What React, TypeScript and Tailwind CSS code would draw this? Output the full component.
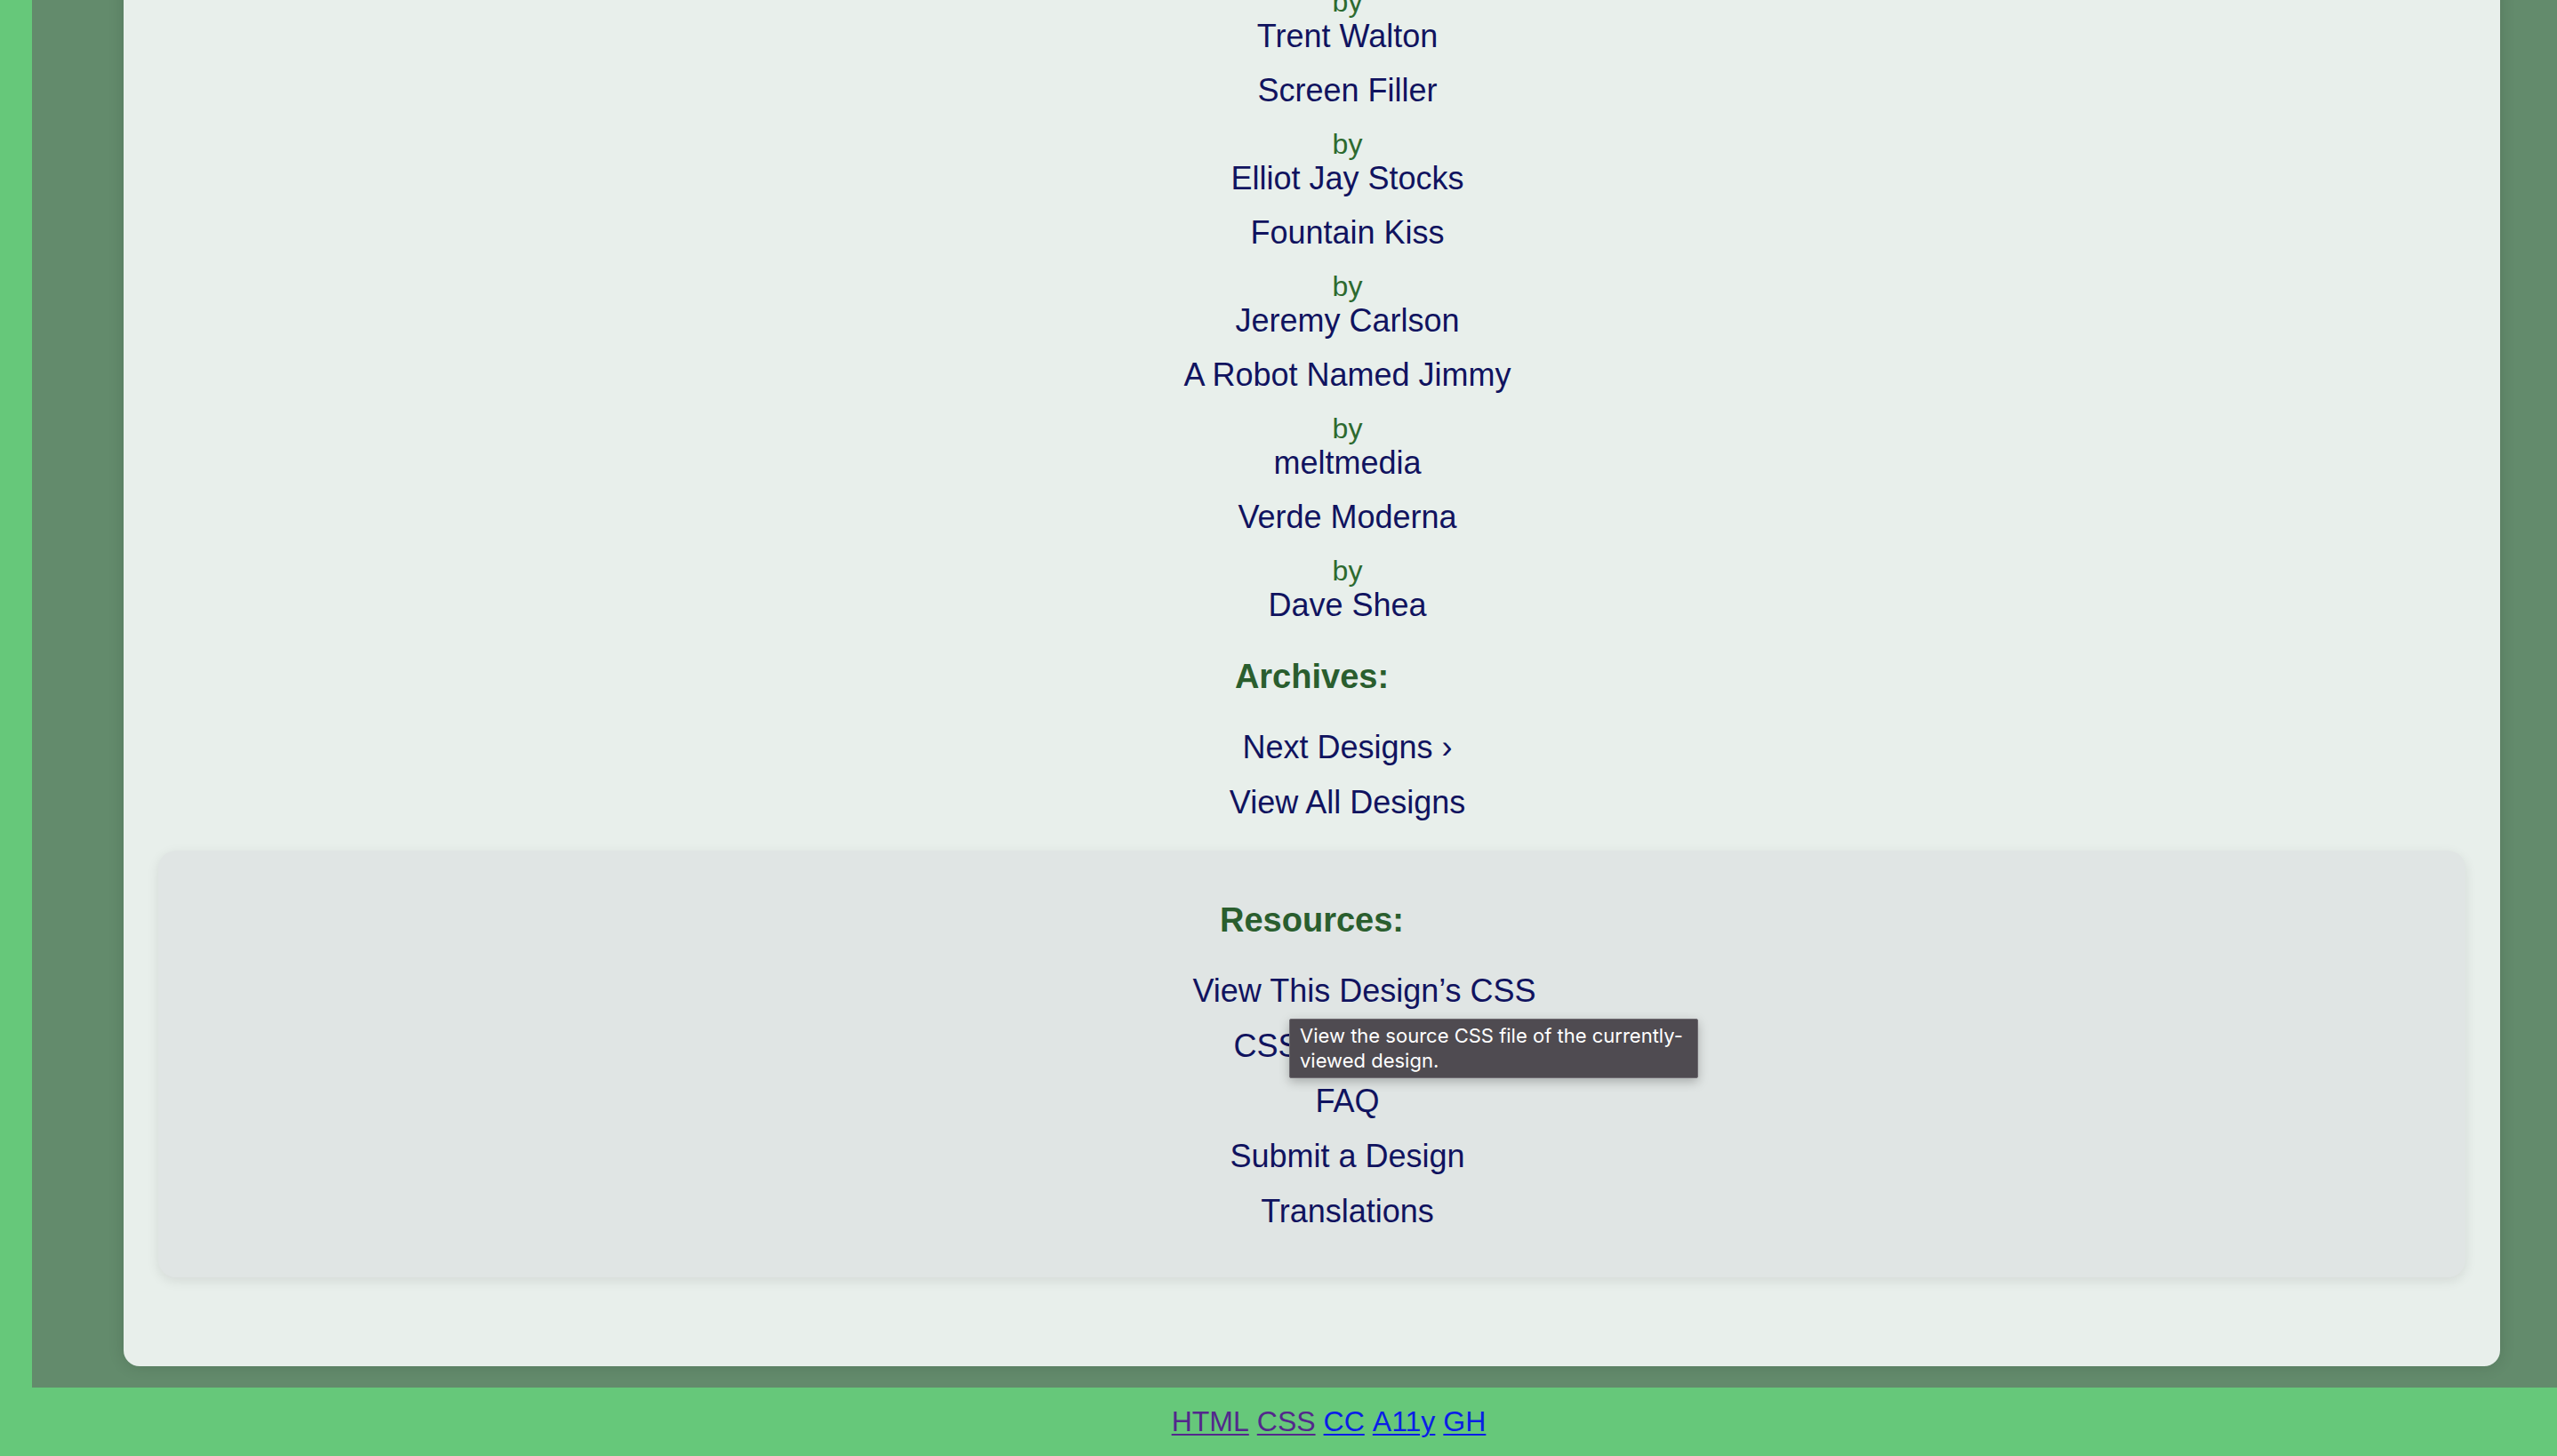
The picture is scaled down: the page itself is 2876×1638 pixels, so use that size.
const designs = [
  { title: 'Screen Filler', author: 'Elliot Jay Stocks' },
  { title: 'Fountain Kiss', author: 'Jeremy Carlson' },
  { title: 'A Robot Named Jimmy', author: 'meltmedia' },
  { title: 'Verde Moderna', author: 'Dave Shea' },
]

const resources = [
  'View This Design’s CSS',
  'CSS Resources',
  'FAQ',
  'Submit a Design',
  'Translations',
]

function By() {
  return <div className="text-[32px] leading-[38px] text-[#2d6a2f]">by</div>
}

function Name({ children }: { children: React.ReactNode }) {
  return <a className="block text-[36px] leading-[40px] text-[#10135f]">{children}</a>
}

export default function App() {
  return (
    <div
      className="relative w-[2876px] h-[1638px] overflow-hidden bg-[#66c87a]"
      style={{ fontFamily: '"Liberation Sans", Arial, sans-serif' }}
    >
      <div className="pl-[36px]">
        <div className="bg-[#638b6c] pl-[103px] pr-[64px] pb-[24px]">
          <div className="-mt-[40px] rounded-[18px] bg-[#e8efeb] px-[39px] pt-[23px] pb-[100px] shadow-[0_0_18px_rgba(0,0,0,0.14)]">
            <ul className="flex flex-col pl-[80px] text-center">
              <li className="mb-[21px]">
                <By />
                <Name>Trent Walton</Name>
              </li>
              {designs.map((d) => (
                <li key={d.title} className="mb-[21px]">
                  <Name>{d.title}</Name>
                  <div className="mt-[21px]">
                    <By />
                    <Name>{d.author}</Name>
                  </div>
                </li>
              ))}
            </ul>

            <h3 className="mt-[17px] text-center text-[38px] leading-[44px] font-bold text-[#2a5e2e]">Archives:</h3>
            <ul className="mt-[38px] pl-[80px] text-center flex flex-col gap-[22px]">
              <li><Name>Next Designs ›</Name></li>
              <li><Name>View All Designs</Name></li>
            </ul>

            <div className="mt-[34px] rounded-[20px] bg-[#e0e5e4] pt-[56px] pb-[54px] shadow-[0_4px_14px_rgba(0,0,0,0.09)]">
              <h3 className="text-center text-[38px] leading-[44px] font-bold text-[#2a5e2e]">Resources:</h3>
              <ul className="mt-[38px] pl-[80px] text-center flex flex-col gap-[22px]">
                {resources.map((r, i) => (
                  <li key={r} className={i === 0 ? 'pl-[38px]' : ''}><Name>{r}</Name></li>
                ))}
              </ul>
            </div>
          </div>
        </div>
      </div>

      <footer className="flex justify-center pl-[113px] pt-[20px] pb-[20px] text-[32px] leading-[37px]">
        <p className="flex gap-[9px]">
          <a className="underline decoration-2 underline-offset-[3px] text-[#53288c]">HTML</a>
          <a className="underline decoration-2 underline-offset-[3px] text-[#53288c]">CSS</a>
          <a className="underline decoration-2 underline-offset-[3px] text-[#0a1ee6]">CC</a>
          <a className="underline decoration-2 underline-offset-[3px] text-[#0a1ee6]">A11y</a>
          <a className="underline decoration-2 underline-offset-[3px] text-[#0a1ee6]">GH</a>
        </p>
      </footer>

      <div
        className="absolute left-[1450px] top-[1146px] w-[460px] rounded-[2px] border border-[#6e6a70] bg-[#4f4b51] px-[11px] pt-[4px] pb-[5px] text-[22px] leading-[28px] text-white shadow-[0_4px_12px_rgba(0,0,0,0.25)]"
        style={{ fontFamily: 'Inter, Roboto, sans-serif' }}
      >
        View the source CSS file of the currently-viewed design.
      </div>
    </div>
  )
}
